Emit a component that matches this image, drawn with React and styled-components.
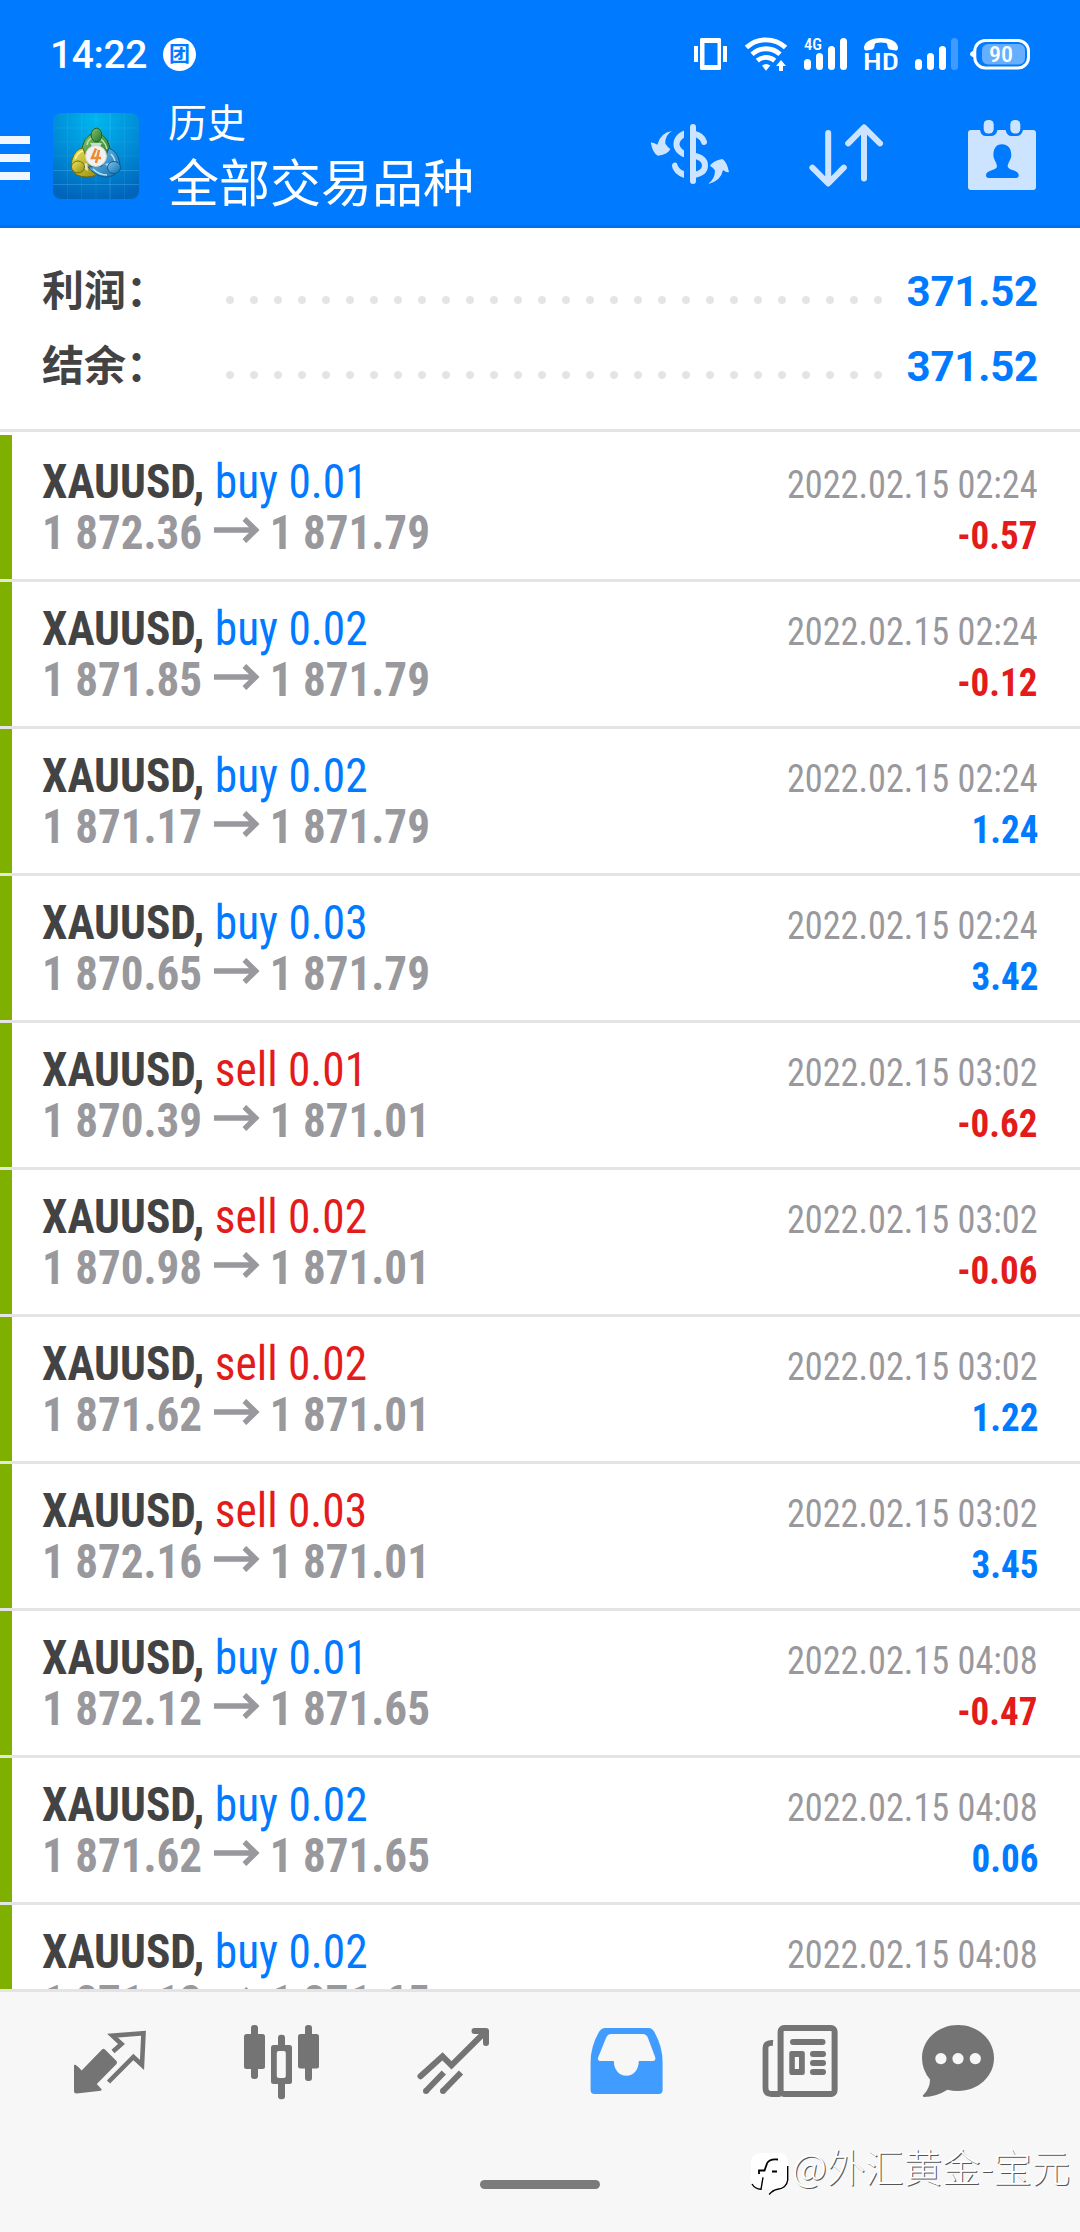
import React from 'react';
import styled, { createGlobalStyle, css } from 'styled-components';

const blue = '#007aff';
const red = '#e31b1b';
const line = '#e4e4e4';
const iconGray = '#747474';

const GlobalStyle = createGlobalStyle`
  * {
    box-sizing: border-box;
  }

  body {
    margin: 0;
    background: #fff;
    font-family: Roboto, 'Noto Sans CJK SC', sans-serif;
  }

  svg {
    display: block;
    flex: none;
  }
`;

const condensed = css`
  font-family: 'Roboto Condensed', Roboto, 'Noto Sans CJK SC', sans-serif;
  font-stretch: 75%;
`;

const Screen = styled.div`
  position: relative;
  width: 1080px;
  height: 2232px;
  display: flex;
  flex-direction: column;
  overflow: hidden;
  background: #fff;
`;

const Header = styled.header`
  height: 228px;
  flex: none;
  background: ${blue};
  border-bottom: 3px solid #006fe8;
  color: #fff;
`;

const StatusBar = styled.div`
  height: 98px;
  padding: 10px 50px 0 50px;
  display: flex;
  align-items: center;
`;

const Clock = styled.span`
  font-size: 39px;
  font-weight: 500;
  line-height: 46px;
  letter-spacing: -0.4px;
  width: 113px;
  margin-top: 2px;
`;

const Badge = styled.span`
  width: 33px;
  height: 33px;
  border-radius: 50%;
  background: #fff;
  color: ${blue};
  font-size: 21px;
  font-weight: 700;
  line-height: 32px;
  text-align: center;
`;

const StatusIcons = styled.div`
  margin-left: auto;
  display: flex;
  gap: 17px;

  svg:first-child {
    margin-right: 1px;
  }

  svg:last-child {
    margin-left: -5px;
  }
`;

const StatusText = styled.text`
  ${condensed}
  font-weight: 500;
  font-size: ${({ $size }) => $size}px;
  fill: #fff;
`;

const Toolbar = styled.div`
  height: 127px;
  padding-right: 40px;
  display: flex;
  align-items: flex-start;
`;

const MenuButton = styled.div`
  width: 53px;
  padding-top: 38px;
  display: flex;
  flex-direction: column;
  gap: 10px;
`;

const MenuBar = styled.span`
  width: 30px;
  height: 8px;
  background: #f0f7ff;
`;

const LogoBox = styled.div`
  padding-top: 15px;
`;

const Titles = styled.div`
  flex: 1;
  margin-left: 29px;
  padding-top: 1px;
`;

const Subtitle = styled.div`
  font-size: 39px;
  line-height: 50px;
  height: 52px;
`;

const Title = styled.div`
  font-size: 51px;
  line-height: 68px;
`;

const Actions = styled.div`
  display: flex;
  align-items: flex-start;
  padding-top: 18px;
`;

const Action = styled.div`
  padding-top: ${({ $drop }) => $drop || 0}px;
  margin-left: ${({ $gap }) => $gap || 0}px;
`;

const Summary = styled.section`
  height: 204px;
  flex: none;
  padding: 24px 42px 0;
  border-bottom: 3px solid ${line};
`;

const SummaryRow = styled.div`
  height: 75px;
  display: flex;
  align-items: center;
`;

const SummaryLabel = styled.span`
  width: 176px;
  padding-bottom: 4px;
  font-size: 42px;
  font-weight: 700;
  color: #434343;
`;

const Dots = styled.span`
  width: 672px;
  height: 24px;
  margin-top: 20px;
  background: radial-gradient(circle, ${line} 3.5px, transparent 4.5px) 0 0 / 24px 24px;
`;

const SummaryValue = styled.span`
  margin-left: auto;
  padding-top: 3px;
  font-size: 42px;
  font-weight: 700;
  letter-spacing: -0.2px;
  color: ${blue};
`;

const List = styled.main`
  height: 1557px;
  flex: none;
  padding-top: 3px;
  overflow: hidden;
`;

const Row = styled.div`
  height: 147px;
  border-bottom: 3px solid ${line};
  display: flex;

  &::before {
    content: '';
    width: 12px;
    background: #7fb000;
  }
`;

const RowBody = styled.div`
  ${condensed}
  flex: 1;
  padding: 21px 42px 0 30px;
`;

const RowLine = styled.div`
  height: 51px;
  line-height: 51px;
  display: flex;
  align-items: baseline;
  justify-content: space-between;
  white-space: nowrap;
`;

const Deal = styled.span`
  font-size: 48px;
  transform: scaleX(0.945);
  transform-origin: left;
  color: ${({ $side }) => ($side === 'buy' ? blue : red)};
`;

const Symbol = styled.b`
  color: #434343;
`;

const Prices = styled.span`
  font-size: 48px;
  font-weight: 700;
  color: #98989d;
  display: flex;
  align-items: baseline;
  transform: scaleX(0.939);
  transform-origin: left;

  svg {
    margin: 0 11px 0 12px;
    transform: translateY(-6px);
  }
`;

const Time = styled.span`
  font-size: 39px;
  color: #98989d;
  transform: scaleX(0.93);
  transform-origin: right;
`;

const Profit = styled.span`
  font-size: 39px;
  font-weight: 700;
  transform: scaleX(0.95);
  transform-origin: right;
  color: ${({ $loss }) => ($loss ? red : blue)};
`;

const TabBar = styled.nav`
  flex: 1;
  padding: 22px 24px 0;
  background: #f7f7f7;
  border-top: 3px solid ${line};
`;

const Tabs = styled.div`
  display: flex;
`;

const Tab = styled.div`
  flex: 1;
  display: flex;
  justify-content: center;
  color: ${({ $active }) => ($active ? '#409cff' : iconGray)};
`;

const HomeBar = styled.div`
  width: 120px;
  height: 9px;
  margin: 70px auto 0;
  border-radius: 5px;
  background: #7b7b7b;
`;

const Watermark = styled.div`
  position: absolute;
  left: 750px;
  top: 2138px;
  display: flex;
  align-items: flex-start;
  gap: 3px;
  color: #fff;
  font-size: 38.4px;
  font-weight: 300;
  line-height: 54px;
  font-family: 'Noto Sans CJK SC', sans-serif;
  text-shadow: 1px 1px 0 #555;
  white-space: nowrap;

  svg {
    margin-top: 14px;
  }
`;

const deals = [
  { side: 'buy', lots: '0.01', open: '1 872.36', close: '1 871.79', time: '2022.02.15 02:24', profit: '-0.57' },
  { side: 'buy', lots: '0.02', open: '1 871.85', close: '1 871.79', time: '2022.02.15 02:24', profit: '-0.12' },
  { side: 'buy', lots: '0.02', open: '1 871.17', close: '1 871.79', time: '2022.02.15 02:24', profit: '1.24' },
  { side: 'buy', lots: '0.03', open: '1 870.65', close: '1 871.79', time: '2022.02.15 02:24', profit: '3.42' },
  { side: 'sell', lots: '0.01', open: '1 870.39', close: '1 871.01', time: '2022.02.15 03:02', profit: '-0.62' },
  { side: 'sell', lots: '0.02', open: '1 870.98', close: '1 871.01', time: '2022.02.15 03:02', profit: '-0.06' },
  { side: 'sell', lots: '0.02', open: '1 871.62', close: '1 871.01', time: '2022.02.15 03:02', profit: '1.22' },
  { side: 'sell', lots: '0.03', open: '1 872.16', close: '1 871.01', time: '2022.02.15 03:02', profit: '3.45' },
  { side: 'buy', lots: '0.01', open: '1 872.12', close: '1 871.65', time: '2022.02.15 04:08', profit: '-0.47' },
  { side: 'buy', lots: '0.02', open: '1 871.62', close: '1 871.65', time: '2022.02.15 04:08', profit: '0.06' },
  { side: 'buy', lots: '0.02', open: '1 871.12', close: '1 871.65', time: '2022.02.15 04:08', profit: '' },
];

const VibrateIcon = () => (
  <svg width="33" height="44" fill="#fff">
    <path d="M0 14h4v16H0zM29 14h4v16h-4z" />
    <path fillRule="evenodd" d="M7 6h19l1 1v30l-1 1H7l-1-1V7zM10.5 11v22h13V11z" />
  </svg>
);

const WifiIcon = () => (
  <svg width="42" height="44" fill="none" stroke="#fff" strokeWidth="4.8">
    <path d="M1.5 15.500a28.500 28.500 0 0 1 39 0" />
    <path d="M7 22.300a20.500 20.500 0 0 1 28 0" />
    <path d="M12.300 28.600a13.500 13.500 0 0 1 17.400 0" />
    <path d="M17 33.500q4-3 8.300 0L21 38.800z" fill="#fff" stroke="none" />
    <path d="M36 28l5 6h-3v5h-4v-5h-3z" fill="#fff" stroke="none" />
  </svg>
);

const SignalIcon = ({ label, weak }) => (
  <svg width="43" height="44" fill="#fff">
    <rect x="0" y="27" width="7" height="11" rx="3.500" />
    <rect x="12" y="21" width="7" height="17" rx="3.500" />
    <rect x="24" y="14" width="7" height="24" rx="3.500" />
    <rect x="36" y="6" width="7" height="32" rx="3.500" opacity={weak ? 0.25 : 1} />
    {label && <StatusText x="0" y="18.300" $size={17} textLength="18" lengthAdjust="spacingAndGlyphs">{label}</StatusText>}
  </svg>
);

const HdCallIcon = () => (
  <svg width="34" height="44" fill="#fff">
    <path d="M0 15C1 9 9 6 17 6s16 3 17 9q0 4-2.500 3.500l-6-1q-2-.5-2-3.500 0-2.500-1.500-3-5-.8-10 0-1.500.5-1.500 3 0 3-2 3.500l-6 1Q0 19 0 15z" />
    <StatusText x="-1" y="38" $size={24.5} textLength="36" lengthAdjust="spacingAndGlyphs">HD</StatusText>
  </svg>
);

const BatteryIcon = () => (
  <svg width="60" height="44">
    <rect x="4.800" y="8.500" width="53.700" height="27.500" rx="10.500" fill="none" stroke="#fff" strokeWidth="3" />
    <path d="M4 18.500q-4 1.500-4 3.500t4 3.500z" fill="#fff" />
    <rect x="12" y="12" width="43" height="20.500" rx="6" fill="#fff" opacity=".4" />
    <StatusText x="19" y="29.700" $size={21.5} textLength="24" lengthAdjust="spacingAndGlyphs">90</StatusText>
  </svg>
);

const AppLogo = () => (
  <svg width="86" height="86" viewBox="0 0 86 86">
    <defs>
      <radialGradient id="bg" cx=".5" cy=".08" r=".95">
        <stop offset="0" stopColor="#00b7ef" />
        <stop offset=".55" stopColor="#008bd6" />
        <stop offset="1" stopColor="#0064ba" />
      </radialGradient>
      <linearGradient id="green" x1="0" y1="0" x2="1" y2="1">
        <stop offset="0" stopColor="#86c470" />
        <stop offset="1" stopColor="#1f7527" />
      </linearGradient>
      <linearGradient id="yellow" x1="0" y1="0" x2="1" y2="1">
        <stop offset="0" stopColor="#efe65c" />
        <stop offset="1" stopColor="#968d10" />
      </linearGradient>
      <linearGradient id="sky" x1="0" y1="0" x2="1" y2="1">
        <stop offset="0" stopColor="#7cc6ec" />
        <stop offset="1" stopColor="#0f6dac" />
      </linearGradient>
    </defs>
    <rect width="86" height="86" rx="8" fill="url(#bg)" />
    <path d="M14.500 0v86M28.500 0v86M43 0v86M71.500 0v86M0 15h86M0 29h86M0 43h86" stroke="#7fd4ff" strokeOpacity=".1" />
    <path d="M57 0v86M0 57.500h86M0 71.500h86" stroke="#7fd4ff" strokeOpacity=".25" />
    <path d="M29 42Q28 22 43 20q15 2 14.500 24l-6 4-16-8z" fill="url(#green)" stroke="#1d6326" />
    <path d="M30 35Q22 36 19 47q-3 10 5 15 9 4 20 0l-8-10z" fill="url(#yellow)" stroke="#6d690e" />
    <path d="M56 35q11 5 11 19-4 11-16 10-10-2-16-10l14-1z" fill="url(#sky)" stroke="#0d5a92" />
    <path d="M34 32q1-7 8-8 9 1 12 12" fill="none" stroke="#b8e0a4" strokeWidth="1.500" />
    <path d="M22 46q3-7 8-8" fill="none" stroke="#fbf7ad" strokeWidth="1.500" />
    <path d="M58 41q5 5 4 12M40 56q6 6 14 6" fill="none" stroke="#b6e4fa" strokeWidth="1.500" />
    <path d="M37 30h12l-3 5h-6zM26 53l8-3 1 8zM52 51l9-2-4 7z" fill="#f4faff" opacity=".7" />
    <ellipse cx="43.500" cy="22" rx="5.300" ry="6.800" fill="url(#green)" stroke="#1d6326" />
    <ellipse cx="25" cy="54" rx="6.500" ry="6" fill="url(#yellow)" stroke="#6d690e" />
    <ellipse cx="61" cy="54.500" rx="6.500" ry="6" fill="url(#sky)" stroke="#0d5a92" />
    <circle cx="43" cy="43" r="10.500" fill="#f1f1f1" stroke="#cfd6d0" />
    <path d="M43 35.500l-4 9.500h9M46 37l-3 13" fill="none" stroke="#ee8a30" strokeWidth="2.500" />
  </svg>
);

const CurrencyIcon = () => (
  <svg width="80" height="64" fill="#cce4ff">
    <rect x="40" y="2" width="6" height="60" rx="3" />
    <g fill="none" stroke="#cce4ff" strokeWidth="6" strokeLinecap="round">
      <path d="M44 11.800q8 1.700 10 8" />
      <path d="M43 33.500q12 2 12 10T43 53" />
    </g>
    <path d="M34 8.500C20 14 20 30 34 35.300V28.500q-9-6.500 0-13z" />
    <path d="M34 56Q23 52 21.800 43.500q1-4 5-2.500 1.700 6.500 7.200 8z" />
    <path d="M22 9Q15 13 15.300 21.500q2 3.500 5 5.500-1.500 5-12.500 6.700-5-2.500-7-13 2-.5 6.500 2Q10 11 22 9z" />
    <path d="M58 62q7-5 7-13.500-2-3.500-5-4.500 3-5.500 12.500-7 4.500 3 6.500 13-2 1-6-2-2 11-15 14z" />
  </svg>
);

const SortIcon = () => (
  <svg width="80" height="70" fill="none" stroke="#cce4ff" strokeWidth="6" strokeLinecap="round" strokeLinejoin="round">
    <path d="M22.200 13v50M6.400 47.700L22.200 63.500 37.800 47.700" />
    <path d="M58 58.500V8M42.200 23.300L58 7.500 74 23.300" />
  </svg>
);

const CalendarIcon = () => (
  <svg width="76" height="80" fill="#cce4ff">
    <path
      fillRule="evenodd"
      d="M7 14h9q1 6 6 6h5q5 0 6.500-6h8q1.500 6 6 6h5q5 0 6.500-6H69q3 0 3 3v54q0 3-3 3H7q-3 0-3-3V17q0-3 3-3zM38 28.300c-7 0-9 6-8.500 12 .5 4 3.500 6.500 3.500 10.500-1 4-11 3-11 8.500 0 2 1 2.700 2.500 2.700h27.500q2.700 0 2.700-2.700c0-5.500-9.500-4.500-11-8.500 0-4 3-6.500 3.500-10.500.5-6-2-12-9.200-12z"
    />
    <rect x="19.700" y="4" width="10" height="13.500" rx="4.500" />
    <rect x="46.300" y="4" width="10" height="13.500" rx="4.500" />
  </svg>
);

const PriceArrow = () => (
  <svg width="49" height="26" fill="none" stroke="#98989d" strokeWidth="5.700">
    <path d="M0 13h45M32.500 2L44.500 13 32.500 24" />
  </svg>
);

const QuotesIcon = () => (
  <svg width="96" height="96" fill="currentColor">
    <path d="M12 51q2-1 7.600 5.500L40 35.500q1.500-1.500 3 0L54.500 47q1 1.500 0 3L34.800 70l5 5.500q-.5 1.500-3 1.500l-22.300 2.500Q12 79.500 12 77z" />
    <path d="M51 37.500l8.500-7.500L50.500 21.700 81.500 19.300 80 51 71.400 43 46.500 68" fill="none" stroke="currentColor" strokeWidth="4.600" />
  </svg>
);

const ChartIcon = () => (
  <svg width="96" height="96" fill="currentColor">
    <rect x="17" y="11" width="7" height="54" rx="3" />
    <rect x="10" y="20" width="21" height="35" rx="2.500" />
    <rect x="71" y="11" width="7" height="56" rx="3" />
    <rect x="64" y="20" width="21" height="34.500" rx="2.500" />
    <rect x="44" y="20.700" width="7" height="64.500" rx="3" />
    <rect x="37" y="31" width="21" height="39" rx="2.500" />
    <rect x="42.800" y="37" width="9" height="27" rx="2" fill="#f7f7f7" />
  </svg>
);

const TradeIcon = () => (
  <svg width="96" height="96" fill="none" stroke="currentColor" strokeWidth="6">
    <path d="M14.500 62.300l22-20 9 9L79 18" strokeLinecap="round" />
    <path d="M68.500 17H80v12" strokeLinecap="round" strokeLinejoin="round" />
    <path d="M20 77l17.800-18.500M37 77l18-18.500" />
    <path d="M20 77h.01M37 77h.01" strokeLinecap="round" />
  </svg>
);

const HistoryIcon = () => (
  <svg width="96" height="96" fill="currentColor">
    <path
      fillRule="evenodd"
      d="M27.400 14h43q4 0 6.500 5 7.700 14 7.700 29v28q0 4-4 4H16.600q-4 0-4-4V48q0-15 7.800-29 2.500-5 7-5zM33.500 20q-4 0-5.500 4l-7.700 19q-1.300 4 2 4h13.500c0 9 5.500 14.700 12.600 14.700S60.800 56 60.800 47h14q3.500 0 2.300-4L70 24q-1.500-4-5.500-4z"
    />
  </svg>
);

const NewsIcon = () => (
  <svg width="96" height="96" fill="currentColor">
    <g fill="none" stroke="currentColor" strokeWidth="6">
      <rect x="30.600" y="14" width="54" height="66" rx="3.500" />
      <path d="M23 29q-7.500-.5-7.500 5v40q0 6 6 6h9" strokeWidth="5.800" />
    </g>
    <rect x="40" y="25" width="35.500" height="6" rx="3" />
    <path fillRule="evenodd" d="M41.500 37h11q2.300 0 2.300 2.300v19.400q0 2.300-2.300 2.300h-11q-2.200 0-2.200-2.300V39.300q0-2.300 2.200-2.300zM44.800 43v12H49V43z" />
    <rect x="60" y="37" width="16" height="6" rx="3" />
    <rect x="60" y="46" width="16" height="6" rx="3" />
    <rect x="60" y="55" width="16" height="6" rx="3" />
  </svg>
);

const ChatIcon = () => (
  <svg width="96" height="96" fill="currentColor">
    <path
      fillRule="evenodd"
      d="M36 11c20 0 36 14.500 36 33S56 77 36 77q-6 0-10.500-1.200Q14 83 2 83q-2.500-1 0-2.800Q8 74 8 65.500 0 56 0 44C0 25.500 16 11 36 11zM18.900 39a5.600 5.600 0 1 0 .01 0zM36 39a5.600 5.600 0 1 0 .01 0zM53.300 39a5.600 5.600 0 1 0 .01 0z"
    />
  </svg>
);

const WatermarkIcon = () => (
  <svg width="39" height="44" viewBox="0 0 39 44">
    <path d="M11 1h18q9 0 9 10v16q-1 9-11 10-5 1-8 6 1-5 2-6h-8q-11 0-12-10V11Q1 1 11 1z" fill="#fff" />
    <path d="M37.700 14v14q-1 8-10 9.200-5 .8-8.500 5.300M2 32q3 5 9 5.300l2-12" fill="none" stroke="#000" strokeWidth="1.400" />
    <path d="M28 7.500q-9-1-11 4L14.500 18.500H9v3.500M22 19.500h5" fill="none" stroke="#000" strokeWidth="1.800" />
  </svg>
);

const tabs = [
  { id: 'quotes', Icon: QuotesIcon },
  { id: 'chart', Icon: ChartIcon },
  { id: 'trade', Icon: TradeIcon },
  { id: 'history', Icon: HistoryIcon },
  { id: 'news', Icon: NewsIcon },
  { id: 'chat', Icon: ChatIcon },
];

const DealRow = ({ deal }) => (
  <Row>
    <RowBody>
      <RowLine>
        <Deal $side={deal.side}>
          <Symbol>XAUUSD,</Symbol> {deal.side} {deal.lots}
        </Deal>
        <Time>{deal.time}</Time>
      </RowLine>
      <RowLine>
        <Prices>
          {deal.open}
          <PriceArrow />
          {deal.close}
        </Prices>
        <Profit $loss={deal.profit.startsWith('-')}>{deal.profit}</Profit>
      </RowLine>
    </RowBody>
  </Row>
);

const App = () => {
  return (
    <>
      <GlobalStyle />
      <Screen>
        <Header>
          <StatusBar>
            <Clock>14:22</Clock>
            <Badge>团</Badge>
            <StatusIcons>
              <VibrateIcon />
              <WifiIcon />
              <SignalIcon label="4G" />
              <HdCallIcon />
              <SignalIcon weak />
              <BatteryIcon />
            </StatusIcons>
          </StatusBar>
          <Toolbar>
            <MenuButton>
              <MenuBar />
              <MenuBar />
              <MenuBar />
            </MenuButton>
            <LogoBox>
              <AppLogo />
            </LogoBox>
            <Titles>
              <Subtitle>历史</Subtitle>
              <Title>全部交易品种</Title>
            </Titles>
            <Actions>
              <Action $drop={6}>
                <CurrencyIcon />
              </Action>
              <Action $drop={4} $gap={76}>
                <SortIcon />
              </Action>
              <Action $gap={78}>
                <CalendarIcon />
              </Action>
            </Actions>
          </Toolbar>
        </Header>
        <Summary>
          <SummaryRow>
            <SummaryLabel>利润：</SummaryLabel>
            <Dots />
            <SummaryValue>371.52</SummaryValue>
          </SummaryRow>
          <SummaryRow>
            <SummaryLabel>结余：</SummaryLabel>
            <Dots />
            <SummaryValue>371.52</SummaryValue>
          </SummaryRow>
        </Summary>
        <List>
          {deals.map((deal, i) => (
            <DealRow key={i} deal={deal} />
          ))}
        </List>
        <TabBar>
          <Tabs>
            {tabs.map(({ id, Icon }) => (
              <Tab key={id} $active={id === 'history'}>
                <Icon />
              </Tab>
            ))}
          </Tabs>
          <HomeBar />
        </TabBar>
        <Watermark>
          <WatermarkIcon />
          @外汇黄金-宝元
        </Watermark>
      </Screen>
    </>
  );
};

export default App;
